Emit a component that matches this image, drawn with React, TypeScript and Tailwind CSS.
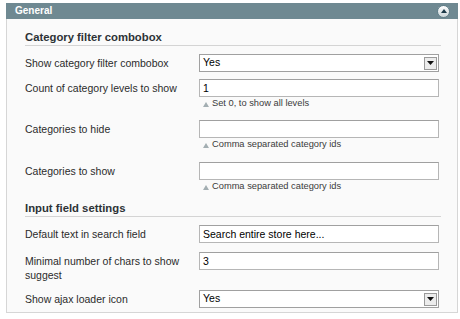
import * as React from "react";

interface RowProps {
  label: React.ReactNode;
  children: React.ReactNode;
  note?: string;
  className?: string;
}

const Row = ({ label, children, note, className }: RowProps) => {
  return (
    <div className={`grid grid-cols-[174px_240px] ${className ?? ""}`}>
      <div className="pt-[2px] leading-[14px] text-[10.5px] text-[#2b2b2b]">{label}</div>
      <div>
        {children}
        {note && (
          <div className="flex items-center h-[14px] pl-[4px] text-[9.3px] text-[#3a3a3a]">
            <svg width="6" height="5" viewBox="0 0 6 5" className="mr-[3px]">
              <polygon points="3,0 6,5 0,5" fill="#a3aeb2" />
            </svg>
            {note}
          </div>
        )}
      </div>
    </div>
  );
};

const TextInput = ({ value }: { value?: string }) => {
  return (
    <div className="h-[18px] border border-[#b6b6b6] border-t-[#a0a0a0] bg-white pl-[3px] text-[10.5px] leading-[16px] text-black">
      {value}
    </div>
  );
};

const Select = ({ value }: { value: string }) => {
  return (
    <div className="h-[18px] border border-[#a0a0a0] bg-white flex items-center justify-between pl-[3px] pr-[1px] text-[10.5px] text-black">
      <span>{value}</span>
      <span className="w-[13px] h-[13px] border border-[#9a9a9a] bg-[#ececec] flex items-center justify-center">
        <svg width="7" height="4" viewBox="0 0 7 4">
          <polygon points="0,0 7,0 3.5,4" fill="#111" />
        </svg>
      </span>
    </div>
  );
};

const SectionTitle = ({ children, className }: { children: string; className?: string }) => {
  return (
    <div
      className={`mr-[1px] border-b border-[#d4d4d4] pb-[1px] text-[11.3px] leading-[14px] font-bold text-[#2d3236] ${className ?? ""}`}
    >
      {children}
    </div>
  );
};

export default function App() {
  return (
    <div className="bg-white w-[460px] h-[319px] pt-[3px] pl-[6px] font-['Liberation_Sans',Arial,sans-serif]">
      <div className="w-[452px]">
        <div className="h-[16px] bg-[#6f8992] flex items-center justify-between pl-[9px] pr-[8px]">
          <span className="text-white text-[10px] font-bold leading-none">General</span>
          <span className="w-[13px] h-[13px] rounded-full bg-gradient-to-b from-white to-[#c9d4d8] border border-[#62808a] flex items-center justify-center">
            <svg width="6" height="4" viewBox="0 0 6 4">
              <polygon points="3,0 6,4 0,4" fill="#1c3a48" />
            </svg>
          </span>
        </div>
        <div className="bg-[#fafafa] border border-t-0 border-[#d6d6d6] pl-[18px] pr-[15px] pt-[11px] pb-[4px]">
          <SectionTitle>Category filter combobox</SectionTitle>
          <Row label="Show category filter combobox" className="mt-[8px]">
            <Select value="Yes" />
          </Row>
          <Row label="Count of category levels to show" note="Set 0, to show all levels" className="mt-[7px]">
            <TextInput value="1" />
          </Row>
          <Row label="Categories to hide" note="Comma separated category ids" className="mt-[9px]">
            <TextInput />
          </Row>
          <Row label="Categories to show" note="Comma separated category ids" className="mt-[10px]">
            <TextInput />
          </Row>
          <SectionTitle className="mt-[7px]">Input field settings</SectionTitle>
          <Row label="Default text in search field" className="mt-[8px]">
            <TextInput value="Search entire store here..." />
          </Row>
          <Row label="Minimal number of chars to show suggest" className="mt-[9px]">
            <TextInput value="3" />
          </Row>
          <Row label="Show ajax loader icon" className="mt-[8px]">
            <Select value="Yes" />
          </Row>
        </div>
      </div>
    </div>
  );
}
